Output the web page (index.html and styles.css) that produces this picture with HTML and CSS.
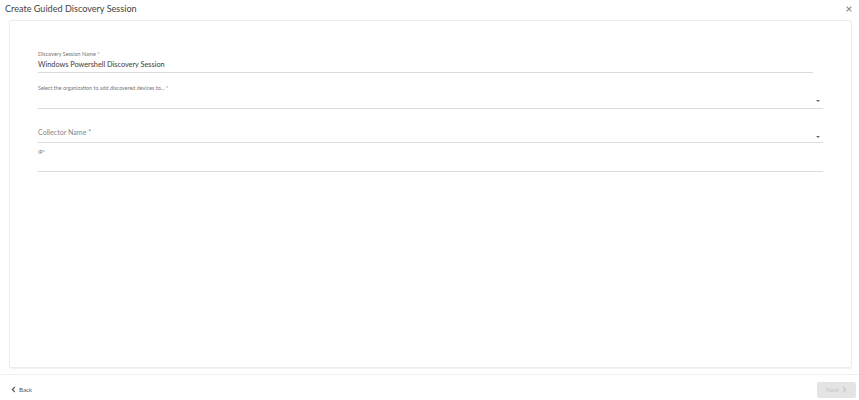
FILE: index.html
```html
<!DOCTYPE html>
<html>
<head>
<meta charset="utf-8">
<link rel="stylesheet" href="styles.css">
</head>
<body>
<div class="dialog">
  <header class="head">
    <h1 class="title">Create Guided Discovery Session</h1>
    <svg class="close" width="6" height="6" viewBox="0 0 6 6"><path d="M0.6 0.6 L5.4 5.4 M5.4 0.6 L0.6 5.4" stroke="#8a8a8a" stroke-width="1.1"/></svg>
  </header>
  <main class="card">
    <div class="field f-name">
      <label class="lbl">Discovery Session Name *</label>
      <div class="val">Windows Powershell Discovery Session</div>
    </div>
    <div class="field f-org">
      <label class="lbl">Select the organization to add discovered devices to... *</label>
      <div class="val select"><span></span><i class="caret"></i></div>
    </div>
    <div class="field f-coll">
      <div class="val select"><span class="ph">Collector Name *</span><i class="caret"></i></div>
    </div>
    <div class="field f-ip">
      <label class="lbl">IP*</label>
      <div class="val"></div>
    </div>
  </main>
  <footer class="foot">
    <button class="back"><svg width="5" height="7" viewBox="0 0 5 7"><path d="M3.8 0.8 L1.4 3.5 L3.8 6.2" fill="none" stroke="#555" stroke-width="1.2"/></svg>Back</button>
    <button class="next" disabled>Next <svg width="5" height="7" viewBox="0 0 5 7"><path d="M1.2 0.8 L3.6 3.5 L1.2 6.2" fill="none" stroke="#c4c4c4" stroke-width="1.2"/></svg></button>
  </footer>
</div>
</body>
</html>
```

FILE: styles.css
```css
* { box-sizing: border-box; }
html, body { margin: 0; padding: 0; background: #fff; }
body { font-family: Lato, "Open Sans", sans-serif; color: #333; }
.dialog { width: 859px; height: 400px; display: flex; flex-direction: column; }
.head { height: 20px; display: flex; align-items: center; justify-content: space-between; padding: 0 7px 2px 5px; }
.title { margin: 0; font-size: 9.1px; font-weight: 400; color: #444; line-height: 12px; }
.close { display: block; }
.card { margin: 0 7px 0 9px; height: 348px; flex: none; border: 1px solid #ededed; border-radius: 2px; box-shadow: 0 1px 1px rgba(0,0,0,0.06); padding: 29px 28px 0 28px; }
.field { display: flex; flex-direction: column; }
.lbl { font-size: 5.4px; color: #777; line-height: 8px; height: 8px; }
.val { border-bottom: 1px solid #dcdcdc; font-size: 7.3px; color: #3a3a3a; line-height: 12px; }
.f-name { margin-right: 10px; }
.f-name .val { height: 15px; padding-top: 1px; }
.f-org { margin-top: 11px; }
.f-org .val { height: 17px; }
.select { display: flex; align-items: center; justify-content: space-between; padding-right: 3px; }
.caret { width: 0; height: 0; border-left: 2.5px solid transparent; border-right: 2.5px solid transparent; border-top: 2.5px solid #666; }
.f-org .caret { margin-top: 2px; }
.f-coll .val { height: 34px; align-items: flex-end; padding-bottom: 3px; }
.f-coll .caret { margin-bottom: 1px; }
.ph { color: #888; font-size: 7.1px; }
.f-ip { margin-top: 5px; }
.f-ip .val { height: 16px; }
.foot { margin-top: 6px; border-top: 1px solid #efefef; flex: 1; display: flex; align-items: center; justify-content: space-between; padding: 4px 3px 0 11px; }
.back { background: none; border: 0; font-family: inherit; font-size: 6.2px; color: #555; display: flex; align-items: center; gap: 3px; padding: 0; }
.next { background: #e4e4e4; border: 0; border-radius: 2px; width: 39px; height: 16px; font-family: inherit; font-size: 6.2px; color: #c4c4c4; display: flex; align-items: center; justify-content: center; gap: 3px; padding: 0; }
```
